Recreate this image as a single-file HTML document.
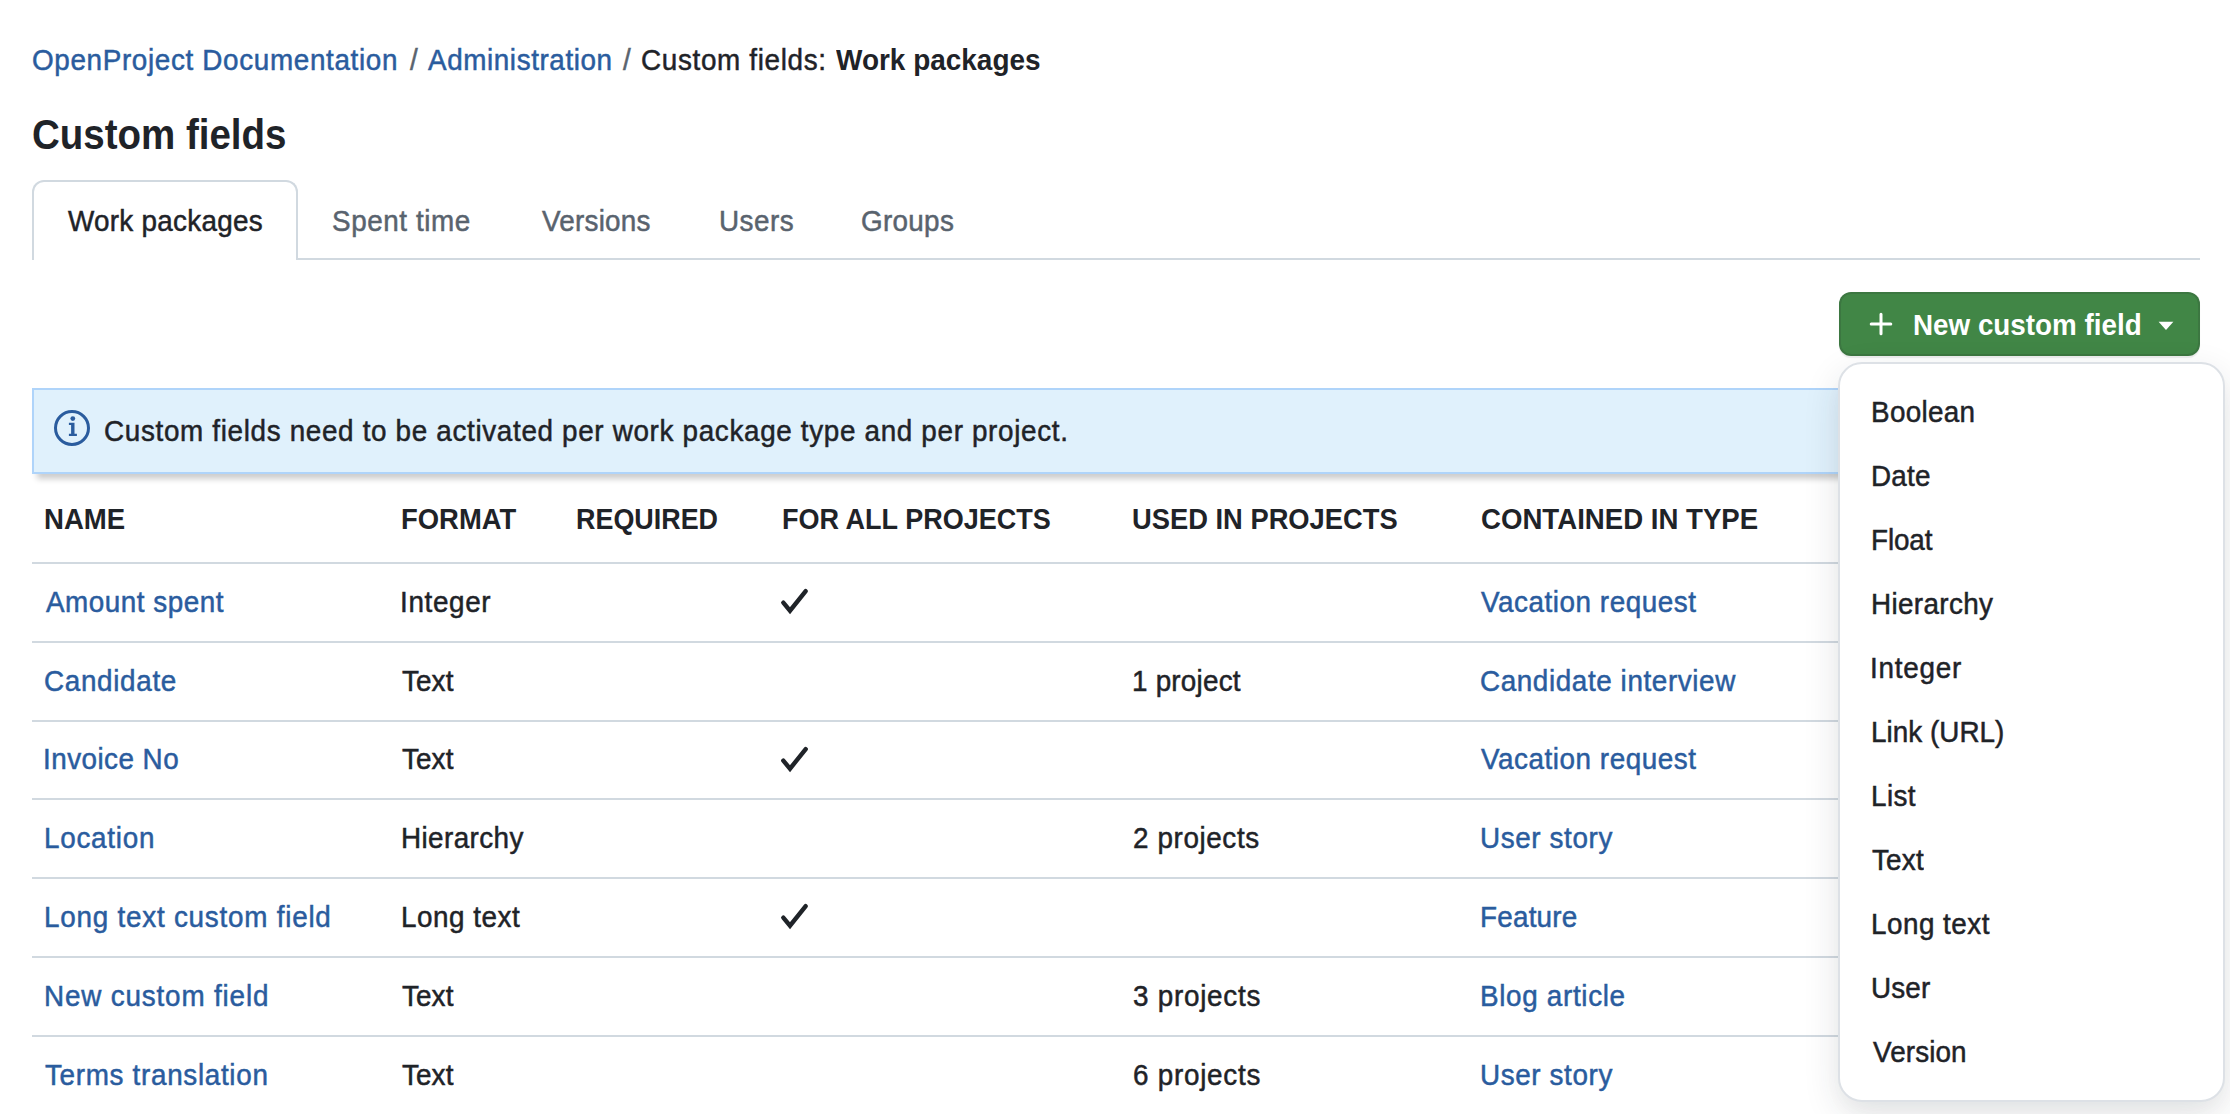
<!DOCTYPE html>
<html><head><meta charset="utf-8"><title>Custom fields</title>
<style>
html,body{margin:0;padding:0;background:#ffffff;width:2230px;height:1114px;overflow:hidden;position:relative;font-family:"Liberation Sans",sans-serif;}
.t{position:absolute;white-space:pre;}
.r{-webkit-text-stroke:0.5px currentColor;}
.tab-active{position:absolute;left:32px;top:180px;width:262px;height:78px;border:2px solid #d1d9e0;border-bottom:none;border-radius:12px 12px 0 0;background:#fff;}
.tabline{position:absolute;left:296px;top:258px;width:1904px;height:2px;background:#d1d9e0;}
.btn{position:absolute;left:1839px;top:292px;width:361px;height:64px;box-sizing:border-box;background:#418646;border:2px solid rgba(31,35,40,0.15);border-radius:12px;box-shadow:0 2px 1px rgba(31,35,40,0.08);}
.banner{position:absolute;left:32px;top:388px;width:2164px;height:82px;background:#e0f1fc;border:2px solid #afd4fa;box-shadow:0 10px 6px -5px rgba(0,0,0,0.2);}
.hl{position:absolute;left:32px;width:2168px;height:2px;background:#d1d9e0;}
.chk{position:absolute;left:770px;line-height:0;}
.dd{position:absolute;left:1838px;top:362px;width:383px;height:736px;background:#fff;border:2px solid #dde1e6;border-radius:24px;box-shadow:0 12px 24px -6px rgba(37,41,46,0.04),0 12px 36px rgba(37,41,46,0.12);}
</style></head><body>
<div id="bc1" class="t r" style="left:32.00px;top:45.75px;font-size:29px;line-height:29px;font-weight:400;color:#2a5c9e;letter-spacing:0.681px;transform:scaleX(0.9600);transform-origin:0 0">OpenProject Documentation</div>
<div id="bc2" class="t r" style="left:410.20px;top:45.75px;font-size:29px;line-height:29px;font-weight:400;color:#59636e;letter-spacing:0.000px;transform:scaleX(0.9600);transform-origin:0 0">/</div>
<div id="bc3" class="t r" style="left:427.80px;top:45.75px;font-size:29px;line-height:29px;font-weight:400;color:#2a5c9e;letter-spacing:0.615px;transform:scaleX(0.9600);transform-origin:0 0">Administration</div>
<div id="bc4" class="t r" style="left:623.40px;top:45.75px;font-size:29px;line-height:29px;font-weight:400;color:#59636e;letter-spacing:0.000px;transform:scaleX(0.9600);transform-origin:0 0">/</div>
<div id="bc5" class="t r" style="left:640.60px;top:45.75px;font-size:29px;line-height:29px;font-weight:400;color:#1f2328;letter-spacing:0.698px;transform:scaleX(0.9600);transform-origin:0 0">Custom fields:</div>
<div id="bc6" class="t" style="left:835.60px;top:46.25px;font-size:29px;line-height:29px;font-weight:700;color:#1f2328;letter-spacing:0.000px;transform:scaleX(0.9639);transform-origin:0 0">Work packages</div>
<div id="h1" class="t" style="left:32.00px;top:112.90px;font-size:43px;line-height:43px;font-weight:700;color:#1f2328;letter-spacing:0.000px;transform:scaleX(0.8951);transform-origin:0 0">Custom fields</div>
<div class="tabline"></div>
<div class="tab-active"></div>
<div id="tab1" class="t r" style="left:68.00px;top:206.95px;font-size:29px;line-height:29px;font-weight:400;color:#1f2328;letter-spacing:0.292px;transform:scaleX(0.9600);transform-origin:0 0">Work packages</div>
<div id="tab2" class="t r" style="left:332.00px;top:206.95px;font-size:29px;line-height:29px;font-weight:400;color:#59636e;letter-spacing:0.596px;transform:scaleX(0.9600);transform-origin:0 0">Spent time</div>
<div id="tab3" class="t r" style="left:541.80px;top:206.95px;font-size:29px;line-height:29px;font-weight:400;color:#59636e;letter-spacing:0.253px;transform:scaleX(0.9600);transform-origin:0 0">Versions</div>
<div id="tab4" class="t r" style="left:719.00px;top:206.95px;font-size:29px;line-height:29px;font-weight:400;color:#59636e;letter-spacing:0.525px;transform:scaleX(0.9600);transform-origin:0 0">Users</div>
<div id="tab5" class="t r" style="left:861.20px;top:206.95px;font-size:29px;line-height:29px;font-weight:400;color:#59636e;letter-spacing:0.320px;transform:scaleX(0.9600);transform-origin:0 0">Groups</div>
<div class="banner"></div>
<svg style="position:absolute;left:52px;top:408px" width="40" height="40" viewBox="0 0 40 40"><circle cx="20" cy="20" r="16.5" fill="none" stroke="#2a5c9e" stroke-width="3"/><circle cx="20.8" cy="10.6" r="2.4" fill="#2a5c9e"/><path d="M16.9 14.7H22.5V25.7H24.9V28.1H16.9V25.7H19.1V17.1H16.9Z" fill="#2a5c9e"/></svg>
<div id="info" class="t r" style="left:104.40px;top:416.85px;font-size:29px;line-height:29px;font-weight:400;color:#1f2328;letter-spacing:0.691px;transform:scaleX(0.9600);transform-origin:0 0">Custom fields need to be activated per work package type and per project.</div>
<div id="th0" class="t" style="left:44.20px;top:505.45px;font-size:29px;line-height:29px;font-weight:700;color:#1f2328;letter-spacing:0.000px;transform:scaleX(0.9508);transform-origin:0 0">NAME</div>
<div id="th1" class="t" style="left:401.00px;top:505.45px;font-size:29px;line-height:29px;font-weight:700;color:#1f2328;letter-spacing:0.000px;transform:scaleX(0.9457);transform-origin:0 0">FORMAT</div>
<div id="th2" class="t" style="left:576.00px;top:505.45px;font-size:29px;line-height:29px;font-weight:700;color:#1f2328;letter-spacing:0.000px;transform:scaleX(0.9279);transform-origin:0 0">REQUIRED</div>
<div id="th3" class="t" style="left:781.80px;top:505.45px;font-size:29px;line-height:29px;font-weight:700;color:#1f2328;letter-spacing:0.000px;transform:scaleX(0.9321);transform-origin:0 0">FOR ALL PROJECTS</div>
<div id="th4" class="t" style="left:1132.00px;top:505.45px;font-size:29px;line-height:29px;font-weight:700;color:#1f2328;letter-spacing:0.000px;transform:scaleX(0.9421);transform-origin:0 0">USED IN PROJECTS</div>
<div id="th5" class="t" style="left:1480.80px;top:505.45px;font-size:29px;line-height:29px;font-weight:700;color:#1f2328;letter-spacing:0.000px;transform:scaleX(0.9523);transform-origin:0 0">CONTAINED IN TYPE</div>
<div class="hl" style="top:562.0px"></div>
<div class="hl" style="top:641.0px"></div>
<div class="hl" style="top:719.5px"></div>
<div class="hl" style="top:798.0px"></div>
<div class="hl" style="top:877.0px"></div>
<div class="hl" style="top:956.0px"></div>
<div class="hl" style="top:1034.5px"></div>
<div id="r0n" class="t r" style="left:46.00px;top:587.85px;font-size:29px;line-height:29px;font-weight:400;color:#2a5c9e;letter-spacing:0.543px;transform:scaleX(0.9600);transform-origin:0 0">Amount spent</div>
<div id="r0f" class="t r" style="left:400.20px;top:587.85px;font-size:29px;line-height:29px;font-weight:400;color:#1f2328;letter-spacing:0.681px;transform:scaleX(0.9600);transform-origin:0 0">Integer</div>
<div id="r0t" class="t r" style="left:1480.50px;top:587.85px;font-size:29px;line-height:29px;font-weight:400;color:#2a5c9e;letter-spacing:0.558px;transform:scaleX(0.9600);transform-origin:0 0">Vacation request</div>
<div id="r1n" class="t r" style="left:44.00px;top:666.65px;font-size:29px;line-height:29px;font-weight:400;color:#2a5c9e;letter-spacing:0.700px;transform:scaleX(0.9600);transform-origin:0 0">Candidate</div>
<div id="r1f" class="t r" style="left:402.20px;top:666.65px;font-size:29px;line-height:29px;font-weight:400;color:#1f2328;letter-spacing:0.107px;transform:scaleX(0.9600);transform-origin:0 0">Text</div>
<div id="r1u" class="t r" style="left:1132.00px;top:666.65px;font-size:29px;line-height:29px;font-weight:400;color:#1f2328;letter-spacing:0.225px;transform:scaleX(0.9600);transform-origin:0 0">1 project</div>
<div id="r1t" class="t r" style="left:1479.50px;top:666.65px;font-size:29px;line-height:29px;font-weight:400;color:#2a5c9e;letter-spacing:0.621px;transform:scaleX(0.9600);transform-origin:0 0">Candidate interview</div>
<div id="r2n" class="t r" style="left:43.00px;top:745.45px;font-size:29px;line-height:29px;font-weight:400;color:#2a5c9e;letter-spacing:0.476px;transform:scaleX(0.9600);transform-origin:0 0">Invoice No</div>
<div id="r2f" class="t r" style="left:402.20px;top:745.45px;font-size:29px;line-height:29px;font-weight:400;color:#1f2328;letter-spacing:0.107px;transform:scaleX(0.9600);transform-origin:0 0">Text</div>
<div id="r2t" class="t r" style="left:1480.50px;top:745.45px;font-size:29px;line-height:29px;font-weight:400;color:#2a5c9e;letter-spacing:0.558px;transform:scaleX(0.9600);transform-origin:0 0">Vacation request</div>
<div id="r3n" class="t r" style="left:44.00px;top:824.25px;font-size:29px;line-height:29px;font-weight:400;color:#2a5c9e;letter-spacing:0.764px;transform:scaleX(0.9600);transform-origin:0 0">Location</div>
<div id="r3f" class="t r" style="left:401.20px;top:824.25px;font-size:29px;line-height:29px;font-weight:400;color:#1f2328;letter-spacing:0.425px;transform:scaleX(0.9600);transform-origin:0 0">Hierarchy</div>
<div id="r3u" class="t r" style="left:1133.00px;top:824.25px;font-size:29px;line-height:29px;font-weight:400;color:#1f2328;letter-spacing:0.632px;transform:scaleX(0.9600);transform-origin:0 0">2 projects</div>
<div id="r3t" class="t r" style="left:1479.50px;top:824.25px;font-size:29px;line-height:29px;font-weight:400;color:#2a5c9e;letter-spacing:0.632px;transform:scaleX(0.9600);transform-origin:0 0">User story</div>
<div id="r4n" class="t r" style="left:44.00px;top:903.05px;font-size:29px;line-height:29px;font-weight:400;color:#2a5c9e;letter-spacing:0.795px;transform:scaleX(0.9600);transform-origin:0 0">Long text custom field</div>
<div id="r4f" class="t r" style="left:401.20px;top:903.05px;font-size:29px;line-height:29px;font-weight:400;color:#1f2328;letter-spacing:0.550px;transform:scaleX(0.9600);transform-origin:0 0">Long text</div>
<div id="r4t" class="t r" style="left:1479.50px;top:903.05px;font-size:29px;line-height:29px;font-weight:400;color:#2a5c9e;letter-spacing:0.232px;transform:scaleX(0.9600);transform-origin:0 0">Feature</div>
<div id="r5n" class="t r" style="left:44.00px;top:981.85px;font-size:29px;line-height:29px;font-weight:400;color:#2a5c9e;letter-spacing:0.862px;transform:scaleX(0.9600);transform-origin:0 0">New custom field</div>
<div id="r5f" class="t r" style="left:402.20px;top:981.85px;font-size:29px;line-height:29px;font-weight:400;color:#1f2328;letter-spacing:0.107px;transform:scaleX(0.9600);transform-origin:0 0">Text</div>
<div id="r5u" class="t r" style="left:1133.00px;top:981.85px;font-size:29px;line-height:29px;font-weight:400;color:#1f2328;letter-spacing:0.778px;transform:scaleX(0.9600);transform-origin:0 0">3 projects</div>
<div id="r5t" class="t r" style="left:1479.50px;top:981.85px;font-size:29px;line-height:29px;font-weight:400;color:#2a5c9e;letter-spacing:0.695px;transform:scaleX(0.9600);transform-origin:0 0">Blog article</div>
<div id="r6n" class="t r" style="left:45.00px;top:1060.65px;font-size:29px;line-height:29px;font-weight:400;color:#2a5c9e;letter-spacing:0.711px;transform:scaleX(0.9600);transform-origin:0 0">Terms translation</div>
<div id="r6f" class="t r" style="left:402.20px;top:1060.65px;font-size:29px;line-height:29px;font-weight:400;color:#1f2328;letter-spacing:0.107px;transform:scaleX(0.9600);transform-origin:0 0">Text</div>
<div id="r6u" class="t r" style="left:1133.00px;top:1060.65px;font-size:29px;line-height:29px;font-weight:400;color:#1f2328;letter-spacing:0.778px;transform:scaleX(0.9600);transform-origin:0 0">6 projects</div>
<div id="r6t" class="t r" style="left:1479.50px;top:1060.65px;font-size:29px;line-height:29px;font-weight:400;color:#2a5c9e;letter-spacing:0.632px;transform:scaleX(0.9600);transform-origin:0 0">User story</div>
<div class="chk" style="top:580.0px"><svg width="45" height="40" viewBox="0 0 45 40"><path d="M13.3 22.6 L20 30.7 L35.7 11.1" fill="none" stroke="#1f2328" stroke-width="4.4" stroke-linecap="round" stroke-linejoin="miter"/></svg></div>
<div class="chk" style="top:737.6px"><svg width="45" height="40" viewBox="0 0 45 40"><path d="M13.3 22.6 L20 30.7 L35.7 11.1" fill="none" stroke="#1f2328" stroke-width="4.4" stroke-linecap="round" stroke-linejoin="miter"/></svg></div>
<div class="chk" style="top:895.2px"><svg width="45" height="40" viewBox="0 0 45 40"><path d="M13.3 22.6 L20 30.7 L35.7 11.1" fill="none" stroke="#1f2328" stroke-width="4.4" stroke-linecap="round" stroke-linejoin="miter"/></svg></div>
<div class="btn"></div>
<svg style="position:absolute;left:1866.5px;top:309.7px" width="28" height="28" viewBox="0 0 28 28"><path d="M14 4.2v19.6M4.2 14h19.6" stroke="#fff" stroke-width="3" stroke-linecap="round"/></svg>
<div id="btn" class="t" style="left:1913.20px;top:310.65px;font-size:29px;line-height:29px;font-weight:700;color:#ffffff;letter-spacing:0.000px;transform:scaleX(0.9589);transform-origin:0 0">New custom field</div>
<svg style="position:absolute;left:2157px;top:321px" width="18" height="10" viewBox="0 0 18 10"><path d="M1.6 0.8h14.8l-7.4 8.2z" fill="#fff"/></svg>
<div class="dd"></div>
<div id="dd0" class="t r" style="left:1871.20px;top:398.05px;font-size:29px;line-height:29px;font-weight:400;color:#1f2328;letter-spacing:0.319px;transform:scaleX(0.9600);transform-origin:0 0">Boolean</div>
<div id="dd1" class="t r" style="left:1871.20px;top:462.05px;font-size:29px;line-height:29px;font-weight:400;color:#1f2328;letter-spacing:0.229px;transform:scaleX(0.9600);transform-origin:0 0">Date</div>
<div id="dd2" class="t r" style="left:1871.20px;top:526.05px;font-size:29px;line-height:29px;font-weight:400;color:#1f2328;letter-spacing:-0.125px;transform:scaleX(0.9600);transform-origin:0 0">Float</div>
<div id="dd3" class="t r" style="left:1871.20px;top:590.05px;font-size:29px;line-height:29px;font-weight:400;color:#1f2328;letter-spacing:0.374px;transform:scaleX(0.9600);transform-origin:0 0">Hierarchy</div>
<div id="dd4" class="t r" style="left:1870.20px;top:654.05px;font-size:29px;line-height:29px;font-weight:400;color:#1f2328;letter-spacing:0.787px;transform:scaleX(0.9600);transform-origin:0 0">Integer</div>
<div id="dd5" class="t r" style="left:1871.20px;top:718.05px;font-size:29px;line-height:29px;font-weight:400;color:#1f2328;letter-spacing:0.031px;transform:scaleX(0.9600);transform-origin:0 0">Link (URL)</div>
<div id="dd6" class="t r" style="left:1871.20px;top:782.05px;font-size:29px;line-height:29px;font-weight:400;color:#1f2328;letter-spacing:0.435px;transform:scaleX(0.9600);transform-origin:0 0">List</div>
<div id="dd7" class="t r" style="left:1872.20px;top:846.05px;font-size:29px;line-height:29px;font-weight:400;color:#1f2328;letter-spacing:0.197px;transform:scaleX(0.9600);transform-origin:0 0">Text</div>
<div id="dd8" class="t r" style="left:1871.20px;top:910.05px;font-size:29px;line-height:29px;font-weight:400;color:#1f2328;letter-spacing:0.499px;transform:scaleX(0.9600);transform-origin:0 0">Long text</div>
<div id="dd9" class="t r" style="left:1871.20px;top:974.05px;font-size:29px;line-height:29px;font-weight:400;color:#1f2328;letter-spacing:0.135px;transform:scaleX(0.9600);transform-origin:0 0">User</div>
<div id="dd10" class="t r" style="left:1873.20px;top:1038.05px;font-size:29px;line-height:29px;font-weight:400;color:#1f2328;letter-spacing:0.120px;transform:scaleX(0.9600);transform-origin:0 0">Version</div>
</body></html>
